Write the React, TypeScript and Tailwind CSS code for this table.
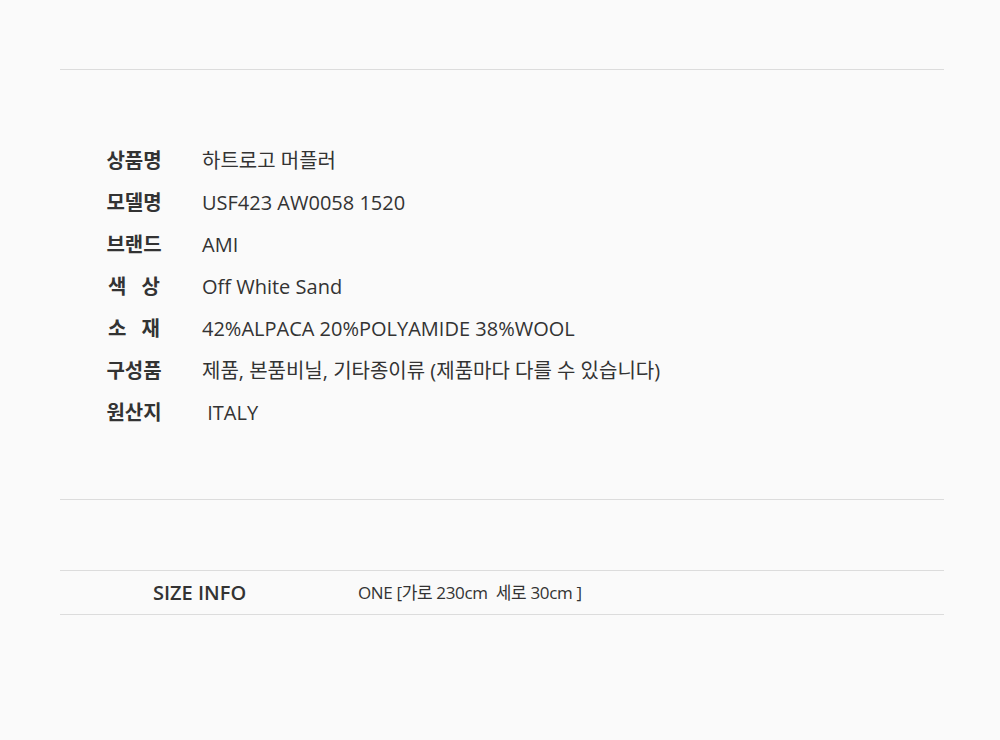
import React from 'react';

const rows: { label: React.ReactNode; value: string }[] = [
  { label: '상품명', value: '하트로고 머플러' },
  { label: '모델명', value: 'USF423 AW0058 1520' },
  { label: '브랜드', value: 'AMI' },
  { label: <span className="flex justify-between px-[4px]"><span>색</span><span>상</span></span>, value: 'Off White Sand' },
  { label: <span className="flex justify-between px-[4px]"><span>소</span><span>재</span></span>, value: '42%ALPACA 20%POLYAMIDE 38%WOOL' },
  { label: '구성품', value: '제품, 본품비닐, 기타종이류 (제품마다 다를 수 있습니다)' },
  { label: '원산지', value: '\u00a0ITALY' },
];

export default function App() {
  return (
    <div
      className="min-h-screen bg-[#fafafa] text-[#333333] pt-[69px]"
      style={{ fontFamily: '"Open Sans", "Noto Sans CJK KR", sans-serif' }}
    >
      <div className="ml-[60px] w-[884px]">
        {/* Product info */}
        <div className="border-t border-[#dcdcdc] pt-[70px] pb-[65px]">
          {rows.map((row, i) => (
            <div key={i} className="flex items-center h-[42px] text-[20px]">
              <div className="w-[60px] ml-[44px] font-semibold text-center">{row.label}</div>
              <div className="ml-[38px]">{row.value}</div>
            </div>
          ))}
        </div>

        {/* Size info */}
        <div className="border-t border-[#dcdcdc] pt-[70px]">
          <div className="flex items-center h-[45px] border-y border-[#dcdcdc]">
            <div className="ml-[93px] w-[205px] text-[20px] font-semibold">SIZE INFO</div>
            <div className="text-[17px] tracking-[-0.35px]">ONE [가로 230cm&nbsp; 세로 30cm ]</div>
          </div>
        </div>
      </div>
    </div>
  );
}
